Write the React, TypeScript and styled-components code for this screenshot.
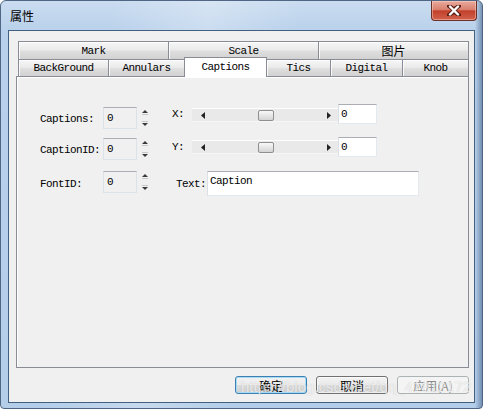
import React from 'react';
import styled, { createGlobalStyle, css } from 'styled-components';

const MONO = `"Liberation Mono", "DejaVu Sans Mono", monospace`;
const CJK = `"Noto Sans CJK SC", "Noto Sans", sans-serif`;

const TOP_TABS = [
  { label: 'Mark', width: 151 },
  { label: 'Scale', width: 151 },
  { label: '图片', width: 151, cjk: true },
];

const BOTTOM_TABS = [
  { label: 'BackGround', width: 91 },
  { label: 'Annulars', width: 77 },
  { label: 'Captions', width: 83, active: true },
  { label: 'Tics', width: 65 },
  { label: 'Digital', width: 73 },
  { label: 'Knob', width: 67 },
];

const GlobalStyle = createGlobalStyle`
  html, body {
    margin: 0;
    padding: 0;
    background: #ffffff;
  }
  body {
    font-family: ${MONO};
  }
  * {
    box-sizing: border-box;
  }
`;

const SpinArrows = () => (
  <svg width="8" height="22" viewBox="0 0 8 22">
    <path d="M4 3 L1 6 L7 6 Z" fill="#3a3a3a" />
    <rect x="1" y="7" width="6" height="1" fill="#c8c8c8" />
    <rect x="1" y="14" width="6" height="1" fill="#c8c8c8" />
    <path d="M1 16 L7 16 L4 19 Z" fill="#3a3a3a" />
  </svg>
);

const ArrowLeft = () => (
  <svg width="4" height="7" viewBox="0 0 4 7">
    <path d="M4 0 L0 3.5 L4 7 Z" fill="#222" />
  </svg>
);

const ArrowRight = () => (
  <svg width="4" height="7" viewBox="0 0 4 7">
    <path d="M0 0 L4 3.5 L0 7 Z" fill="#222" />
  </svg>
);

const CloseGlyph = () => (
  <svg width="14" height="11" viewBox="0 0 14 11">
    <path
      d="M2 1 L7 4.2 L12 1 M2 10 L7 6.8 L12 10 M3 1.5 L11 9.5 M11 1.5 L3 9.5"
      stroke="#5a1e16"
      strokeWidth="4"
      strokeLinecap="round"
      fill="none"
    />
    <path d="M3 1.5 L11 9.5 M11 1.5 L3 9.5" stroke="#ffffff" strokeWidth="2.4" strokeLinecap="round" fill="none" />
  </svg>
);

const App = (): React.JSX.Element => {
  return (
    <>
      <GlobalStyle />
      <Window>
        <TitleBar>
          <Title>属性</Title>
          <CloseButton>
            <CloseGlyph />
          </CloseButton>
        </TitleBar>

        <Client>
          <TabControl>
            <TabRow>
              {TOP_TABS.map((tab) => (
                <Tab key={tab.label} $width={tab.width} $cjk={tab.cjk}>
                  {tab.label}
                </Tab>
              ))}
            </TabRow>
            <TabRow $low>
              {BOTTOM_TABS.map((tab) => (
                <Tab key={tab.label} $width={tab.width} $active={tab.active}>
                  {tab.label}
                </Tab>
              ))}
            </TabRow>

            <TabPage>
              <FieldRow $h={33}>
                <LeftGroup>
                  <FieldLabel $top={4}>Captions:</FieldLabel>
                  <SpinEdit $top={3}>0</SpinEdit>
                  <Spinner $top={3}>
                    <SpinArrows />
                  </Spinner>
                </LeftGroup>
                <AxisLabel $top={0}>X:</AxisLabel>
                <ScrollSlider $top={4}>
                  <ArrowLeft />
                  <Thumb />
                  <ArrowRight />
                </ScrollSlider>
                <Edit $top={0}>0</Edit>
              </FieldRow>

              <FieldRow $h={34}>
                <LeftGroup>
                  <FieldLabel $top={2}>CaptionID:</FieldLabel>
                  <SpinEdit $top={1}>0</SpinEdit>
                  <Spinner $top={1}>
                    <SpinArrows />
                  </Spinner>
                </LeftGroup>
                <AxisLabel $top={0}>Y:</AxisLabel>
                <ScrollSlider $top={3}>
                  <ArrowLeft />
                  <Thumb />
                  <ArrowRight />
                </ScrollSlider>
                <Edit $top={0}>0</Edit>
              </FieldRow>

              <FieldRow $h={30}>
                <LeftGroup>
                  <FieldLabel $top={2}>FontID:</FieldLabel>
                  <SpinEdit $top={0}>0</SpinEdit>
                  <Spinner $top={0}>
                    <SpinArrows />
                  </Spinner>
                </LeftGroup>
                <TextLabel>Text:</TextLabel>
                <TextEdit>Caption</TextEdit>
              </FieldRow>
            </TabPage>
          </TabControl>

          <ButtonBar>
            <Button $variant="default">确定</Button>
            <Button>取消</Button>
            <Button $variant="disabled">应用(A)</Button>
          </ButtonBar>

          <Watermark>https://blog.csdn.net/qq_41812172</Watermark>
        </Client>
      </Window>
    </>
  );
};

const Window = styled.div`
  width: 483px;
  height: 409px;
  display: flex;
  flex-direction: column;
  border: 1px solid #4f6784;
  border-radius: 6px 6px 4px 4px;
  overflow: hidden;
  background:
    linear-gradient(to right, rgba(255, 255, 255, 0) calc(100% - 7px), rgba(70, 100, 140, 0.6) 100%),
    linear-gradient(100deg, rgba(255, 255, 255, 0) 20%, rgba(255, 255, 255, 0.25) 38%, rgba(255, 255, 255, 0) 55%),
    linear-gradient(to bottom, #cadcf0 0, #b9d1eb 30px, #b4cde9 100%);
`;

const TitleBar = styled.div`
  height: 29px;
  flex: 0 0 auto;
  display: flex;
  align-items: flex-start;
  justify-content: space-between;
  padding-left: 9px;
`;

const Title = styled.div`
  margin-top: 8px;
  font-family: ${CJK};
  font-size: 12px;
  line-height: 14px;
  color: #000;
`;

const CloseButton = styled.div`
  width: 46px;
  height: 20px;
  margin-right: 5px;
  display: flex;
  align-items: center;
  justify-content: center;
  border: 1px solid #6b3028;
  border-top: none;
  border-radius: 0 0 4px 4px;
  background: linear-gradient(to bottom, #e9aa9c 0%, #d9806f 45%, #c2412b 52%, #d2604a 100%);
  box-shadow: inset 0 0 0 1px rgba(255, 220, 210, 0.45);
`;

const Client = styled.div`
  position: relative;
  flex: 1 1 auto;
  margin: 0 7px 5px 7px;
  display: flex;
  flex-direction: column;
  border: 1px solid #42607f;
  background: #f0f0f0;
`;

const TabControl = styled.div`
  margin: 10px 5px 0 7px;
  display: flex;
  flex-direction: column;
`;

const TabRow = styled.div<{ $low?: boolean }>`
  display: flex;
  height: ${(p) => (p.$low ? 17 : 18)}px;
  padding-left: 2px;
`;

const Tab = styled.div<{ $width: number; $active?: boolean; $cjk?: boolean }>`
  flex: 0 0 ${(p) => p.$width}px;
  height: 100%;
  display: flex;
  align-items: center;
  justify-content: center;
  margin-left: -1px;
  border: 1px solid #898c95;
  border-bottom: none;
  background: linear-gradient(to bottom, #f6f6f6 0%, #ebebeb 45%, #dedede 55%, #d2d2d2 100%);
  box-shadow: inset 1px 1px 0 rgba(255, 255, 255, 0.8);
  font-family: ${(p) => (p.$cjk ? CJK : MONO)};
  font-size: ${(p) => (p.$cjk ? 12 : 11)}px;
  letter-spacing: ${(p) => (p.$cjk ? 0 : -0.6)}px;
  color: #000;

  &:first-child {
    margin-left: 0;
  }

  ${(p) =>
    p.$active &&
    css`
      position: relative;
      z-index: 2;
      height: 20px;
      margin-top: -2px;
      padding-bottom: 1px;
      background: #ffffff;
      box-shadow: none;
    `}
`;

const TabPage = styled.div`
  height: 292px;
  display: flex;
  flex-direction: column;
  padding: 27px 0 0 23px;
  border: 1px solid #898c95;
  box-shadow: inset 1px 1px 0 #ffffff;
  background: #f0f0f0;
`;

const FieldRow = styled.div<{ $h: number }>`
  height: ${(p) => p.$h}px;
  display: flex;
  align-items: flex-start;
`;

const LeftGroup = styled.div`
  width: 132px;
  display: flex;
  align-items: flex-start;
`;

const monoText = css`
  font-family: ${MONO};
  font-size: 11px;
  letter-spacing: -0.6px;
  color: #000;
`;

const FieldLabel = styled.div<{ $top: number }>`
  ${monoText};
  width: 63px;
  height: 22px;
  line-height: 22px;
  margin-top: ${(p) => p.$top}px;
  white-space: nowrap;
`;

const SpinEdit = styled.div<{ $top: number }>`
  ${monoText};
  width: 34px;
  height: 22px;
  margin-top: ${(p) => p.$top}px;
  padding: 3px 0 0 3px;
  line-height: 14px;
  background: #f0f0f0;
  border: 1px solid #dde2e8;
  border-top-color: #abadb3;
`;

const Spinner = styled.div<{ $top: number }>`
  width: 14px;
  height: 22px;
  margin-top: ${(p) => p.$top}px;
  display: flex;
  justify-content: center;
  padding-left: 1px;
`;

const AxisLabel = styled.div<{ $top: number }>`
  ${monoText};
  width: 20px;
  height: 20px;
  line-height: 20px;
  margin-top: ${(p) => p.$top}px;
`;

const ScrollSlider = styled.div<{ $top: number }>`
  width: 146px;
  height: 14px;
  margin-top: ${(p) => p.$top}px;
  display: flex;
  align-items: center;
  justify-content: space-between;
  padding: 0 7px 0 9px;
  background: #e9e9e9;
  border-top: 1px solid #ffffff;
  border-bottom: 1px solid #f6f6f6;
`;

const Thumb = styled.div`
  width: 16px;
  height: 11px;
  border: 1px solid #8e8f8f;
  border-radius: 2px;
  background: linear-gradient(to bottom, #f7f7f7 0%, #e6e6e6 50%, #d4d4d4 100%);
`;

const whiteEdit = css`
  ${monoText};
  background: #ffffff;
  border: 1px solid #e3e9ef;
  border-top-color: #abadb3;
  border-left-color: #dbdfe6;
`;

const Edit = styled.div<{ $top: number }>`
  ${whiteEdit};
  width: 39px;
  height: 20px;
  margin-top: ${(p) => p.$top}px;
  padding: 2px 0 0 2px;
  line-height: 14px;
`;

const TextLabel = styled.div`
  ${monoText};
  width: 31px;
  height: 20px;
  line-height: 20px;
  margin: 3px 0 0 4px;
`;

const TextEdit = styled.div`
  ${whiteEdit};
  width: 212px;
  height: 25px;
  padding: 2px 0 0 2px;
  line-height: 14px;
`;

const ButtonBar = styled.div`
  display: flex;
  justify-content: flex-end;
  gap: 9px;
  margin-top: 8px;
  padding-right: 5px;
`;

const Button = styled.div<{ $variant?: 'default' | 'disabled' }>`
  width: 72px;
  height: 18px;
  display: flex;
  align-items: center;
  justify-content: center;
  font-family: ${CJK};
  font-size: 12px;
  color: #000;
  border: 1px solid #707070;
  border-radius: 3px;
  background: linear-gradient(to bottom, #f2f2f2 0%, #ebebeb 48%, #dddddd 52%, #cfcfcf 100%);
  box-shadow: inset 0 0 0 1px rgba(255, 255, 255, 0.7);

  ${(p) =>
    p.$variant === 'default' &&
    css`
      border-color: #3c7fb1;
      box-shadow: inset 0 0 0 1px #a8dcf6;
    `}

  ${(p) =>
    p.$variant === 'disabled' &&
    css`
      border-color: #adb2b5;
      background: #f4f4f4;
      color: #8a8a8a;
      box-shadow: none;
    `}
`;

const Watermark = styled.div`
  position: absolute;
  left: 232px;
  top: 347px;
  font-family: "Liberation Sans", Arial, sans-serif;
  font-size: 15px;
  color: rgba(255, 255, 255, 0.7);
  text-shadow: 0 0 1px rgba(90, 90, 90, 0.3);
  white-space: nowrap;
  pointer-events: none;
`;

export default App;
